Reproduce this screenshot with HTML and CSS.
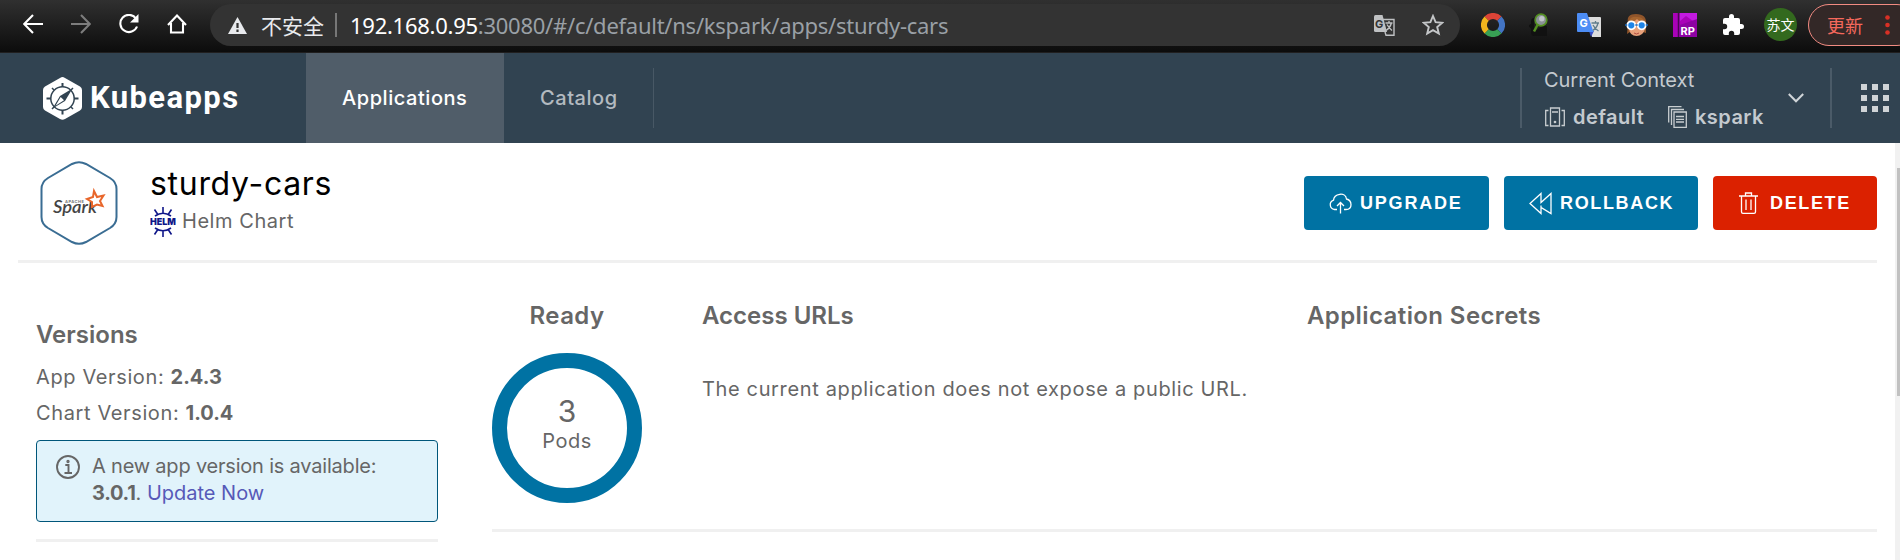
FILE: index.html
```html
<!DOCTYPE html>
<html lang="en">
<head>
<meta charset="utf-8">
<title>Kubeapps</title>
<link rel="stylesheet" href="styles.css">
</head>
<body>
<div class="browser">
  <div class="nav-icons">
    <svg width="20" height="20" viewBox="0 0 20 20" class="line"><path d="M20 10H1.5M10 1L1.200 10L10 19"/></svg>
    <svg width="20" height="20" viewBox="0 0 20 20" class="line dim"><path d="M0 10H18.500M10 1L18.800 10L10 19"/></svg>
    <svg width="22" height="20" viewBox="0 0 22 20" class="line"><path d="M18 4.500A8.600 8.600 0 1 0 19 12.500"/><path d="M20.500 0V8.500H12Z" class="solid"/></svg>
    <svg width="20" height="20" viewBox="0 0 20 20" class="line"><path d="M1 11L10 1.500L19 11M4 9V18.500H16V9"/></svg>
  </div>
  <div class="omnibox">
    <svg width="19" height="17" viewBox="0 0 19 17"><path d="M9.500 0L19 17H0Z" fill="#e8eaed"/><path d="M9.500 6V11M9.500 12.500V15" stroke="#333" stroke-width="2.200"/></svg>
    <span class="insecure">不安全</span><i></i>
    <span class="url"><b>192.168.0.95</b>:30080/#/c/default/ns/kspark/apps/sturdy-cars</span>
    <svg class="ob-translate" width="21" height="21" viewBox="0 0 21 21"><path d="M9 4.500H20V20.200H12L11 17" fill="none" stroke="#bfc1c3" stroke-width="1.400"/><path d="M1.500 0H8.500L13 17H1.500Q0 17 0 15.500V1.500Q0 0 1.500 0Z" fill="#bfc1c3"/><text x="1" y="12.500" class="g-dark">G</text><path d="M11.500 8H18.500M15 6V8M17.500 8Q16 13 12 15.500M13 9.500Q15 13 18 15.500" fill="none" stroke="#bfc1c3" stroke-width="1.300"/></svg>
    <svg class="ob-star" width="22" height="22" viewBox="0 0 22 22"><path d="M11 2L13.600 8.200L20.200 8.700L15.200 13L16.800 19.600L11 16.100L5.200 19.600L6.800 13L1.800 8.700L8.400 8.200Z" fill="none" stroke="#c4c6c8" stroke-width="1.900"/></svg>
  </div>
  <div class="extensions">
    <svg width="24" height="24" viewBox="0 0 24 24" fill="none" stroke-width="6"><path d="M5.600 5.600A9 9 0 0 1 18.400 5.600" stroke="#db4437"/><path d="M18.400 5.600A9 9 0 0 1 18.400 18.400" stroke="#4374c4"/><path d="M18.400 18.400A9 9 0 0 1 5.600 18.400" stroke="#38a054"/><path d="M5.600 18.400A9 9 0 0 1 5.600 5.600" stroke="#f0b51d"/></svg>
    <svg width="24" height="24" viewBox="0 0 24 24"><path d="M5 6Q3 6 3 9V11L1 13L3 15V19Q3 22 5 22M12 14H17V22H5V19" stroke="#111" stroke-width="2" fill="#111"/><path d="M9 11L5 18.500" stroke="#538f20" stroke-width="2.500"/><circle cx="12" cy="7" r="5.800" fill="#8b9297" stroke="#538f20" stroke-width="1.700"/><circle cx="12.800" cy="5.800" r="2.700" fill="#c0c4c8"/></svg>
    <svg width="24" height="24" viewBox="0 0 24 24"><path d="M11 4H23Q24 4 24 5V24H15Z" fill="#dcdcdc"/><path d="M14.500 10H22M18.500 8V10M21 10Q20 15 15 18M16 12Q18 16 21.500 18" fill="none" stroke="#607d8b" stroke-width="1.300"/><path d="M12 18H17L14 24Z" fill="#3a4fc4"/><path d="M1 0H10L16.500 19H1Q0 19 0 18V1Q0 0 1 0Z" fill="#4d8df5"/><text x="2.500" y="14" class="g-white">G</text></svg>
    <svg width="24" height="24" viewBox="0 0 24 24"><path d="M3 10Q1 1 11 1Q22 1 21 11V20L18 19H5L2 21Z" fill="#8f552b"/><path d="M4 8Q10 2 20 8V16Q18 23 11.500 23Q5 23 4 16Z" fill="#e7a17b"/><path d="M4 8Q6 3 12 4Q18 4 20 9Q14 9 12 6Q10 9 4 9Z" fill="#a6652f"/><circle cx="6.300" cy="12.300" r="4" fill="#1d84e8" stroke="#fff" stroke-width="1.800"/><circle cx="16.700" cy="12.300" r="4" fill="#1d84e8" stroke="#fff" stroke-width="1.800"/><path d="M0 12H2.300M10.300 12H12.700M20.700 12H23" stroke="#1d6cc0" stroke-width="1.500"/><path d="M9 20Q11.500 22 14 20" stroke="#b34f43" fill="none"/></svg>
    <svg width="24" height="24" viewBox="0 0 24 24"><path d="M0 0H24V24H0Z" fill="#a902b8"/><path d="M7 8L13 3L24 11V0H7Z" fill="#c31ae0"/><path d="M7 12L24 6V24H7Z" fill="#8d02a3"/><path d="M5.500 0V24" stroke="#4a0455" stroke-width="1.500"/><text x="7.500" y="21.500" class="rp">RP</text></svg>
    <svg width="24" height="24" viewBox="0 0 24 24"><path d="M20.500 11H19V7Q19 5 17 5H13V3.500A2.500 2.500 0 0 0 8 3.500V5H4Q2 5 2 7V10.800H3.500A2.700 2.700 0 0 1 3.500 16.200H2V20Q2 22 4 22H7.800V20.500A2.700 2.700 0 0 1 13.200 20.500V22H17Q19 22 19 20V16H20.500A2.500 2.500 0 0 0 20.500 11Z" fill="#fff"/></svg>
  </div>
  <span class="avatar">苏文</span>
  <div class="update"><span>更新</span><svg width="5" height="20" viewBox="0 0 5 20" fill="#d93025"><circle cx="2.500" cy="2.500" r="2.300"/><circle cx="2.500" cy="10" r="2.300"/><circle cx="2.500" cy="17.500" r="2.300"/></svg></div>
</div>

<header class="header">
  <div class="brand">
    <svg width="39" height="43" viewBox="0 0 39 43"><path d="M19.500 0Q20.500 0 22 1L37 9.500Q39 10.700 39 13V30Q39 32.300 37 33.500L22 42Q19.500 43.500 17 42L2 33.500Q0 32.300 0 30V13Q0 10.700 2 9.500L17 1Q18.500 0 19.500 0Z" fill="#fff"/><g fill="none" stroke="#314351"><circle cx="19.500" cy="21.500" r="11.700" stroke-width="1.500"/><path d="M19.500 6V10M19.500 33V37.500M3.500 21.500H8M31 21.500H35.500" stroke-width="2"/><path d="M9 11L11 13M30 11L28 13M9 32L11 30M30 32L28 30" stroke-width="1.500"/></g><path d="M29.500 11.500L22 24L9.500 31.500L17 19Z" fill="#314351"/><path d="M17.700 20L21 23.200L12.500 28.800Z" fill="#fff"/></svg>
    <span>Kubeapps</span>
  </div>
  <a class="tab active">Applications</a>
  <a class="tab">Catalog</a>
  <i class="rule thin"></i>
  <i class="rule ctx-rule"></i>
  <div class="context">
    <div class="ctx-title">Current Context</div>
    <div class="ctx-row">
      <svg width="20" height="20" viewBox="0 0 20 20" fill="none" stroke="#c8cdd0" stroke-width="1.300"><path d="M5.500 1H14.500V19H5.500ZM7 5H13M3.500 3.500H.7V18.500H3.500M16.500 3.500H19.300V18.500H16.500"/><circle cx="10" cy="15" r=".7"/></svg>
      <b class="c-def">default</b>
      <svg class="ns" width="19" height="22" viewBox="0 0 19 22" fill="none" stroke="#c8cdd0" stroke-width="1.300"><path d="M6 6H18.300V21.300H6ZM8 10.500H16M8 13.300H16M8 16H16M3.500 19V3.500H16M.7 16.500V.7H13.500"/></svg>
      <b class="c-ks">kspark</b>
    </div>
  </div>
  <svg class="chev" width="16" height="10" viewBox="0 0 16 10"><path d="M.8 1L8 8.300L15.200 1" fill="none" stroke="#d0d5d8" stroke-width="2"/></svg>
  <i class="rule end-rule"></i>
  <div class="grid9"><i></i><i></i><i></i><i></i><i></i><i></i><i></i><i></i><i></i></div>
</header>

<div class="page">
  <main>
    <section class="app-head">
      <svg width="78" height="84" viewBox="0 0 78 84"><path d="M32 3Q39 -.5 46 3L70 17Q76.500 21 76.500 28V56Q76.500 63 70 67L46 81Q39 84.500 32 81L8 67Q1.500 63 1.500 56V28Q1.500 21 8 17Z" fill="#fff" stroke="#3a6d93" stroke-width="2"/><text x="25" y="41.500" class="apache" textLength="19">APACHE</text><text x="13" y="52" class="spark" textLength="44" lengthAdjust="spacingAndGlyphs">Spark</text><path d="M54 30L57 36L63.500 34.500L60 40L62.500 45L57 43.500L52 46L52 41L47 38L53 36Z" fill="#fff" stroke="#e8662b" stroke-width="2"/></svg>
      <div class="title">
        <h1>sturdy-cars</h1>
        <p><svg width="26" height="30" viewBox="0 0 26 30"><g fill="none" stroke="#0f1689" stroke-width="1.600"><path d="M5 9Q13 3.500 21 9M5 21Q13 26.500 21 21M13 0V6M13 24V30M4.500 2.500L7.500 7M21.500 2.500L18.500 7M4.500 27.500L7.500 23M21.500 27.500L18.500 23"/></g><text x="0" y="18" class="helm" textLength="26" lengthAdjust="spacingAndGlyphs">HELM</text></svg><span>Helm Chart</span></p>
      </div>
      <div class="buttons">
        <button class="upgrade"><svg width="23" height="21" viewBox="0 0 23 21"><path d="M8 16.500H5.500A4.800 4.800 0 0 1 4.500 7.200C5 .5 16.500 -1.500 17.500 6C19.500 6.500 22 8 22 11.700C22 15 20 16.500 17 16.500H15M11.500 20.500V9.500M8 13L11.500 9.500L15 13"/></svg><span>UPGRADE</span></button>
        <button class="rollback"><svg width="23" height="23" viewBox="0 0 23 23"><path d="M12 1.500L1 11.500L12 21.500V15.500L22 21.500V1.500L12 10.500ZM12 10.500V1.500M12 15.500V13.500"/></svg><span>ROLLBACK</span></button>
        <button class="delete"><svg width="19" height="22" viewBox="0 0 19 22"><path d="M0 4H19M2.500 4V20Q2.500 21.300 4 21.300H15Q16.500 21.300 16.500 20V4M6.500 4V1H12.500V4M7 7.500V18M12 7.500V18"/></svg><span>DELETE</span></button>
      </div>
    </section>
    <section class="body">
      <aside>
        <h2 class="h-ver">Versions</h2>
        <p class="v1">App Version: <b>2.4.3</b></p>
        <p class="v2">Chart Version: <b>1.0.4</b></p>
        <div class="alert">
          <svg width="24" height="24" viewBox="0 0 24 24" fill="none" stroke="#666" stroke-width="1.900"><circle cx="12" cy="12" r="11"/><path d="M9.300 10H12.500V18M8.500 18H16"/><circle cx="12" cy="6.500" r=".7"/></svg>
          <div><div class="a1">A new app version is available:</div><div class="a2"><b>3.0.1</b>. <a>Update Now</a></div></div>
        </div>
      </aside>
      <div class="detail">
        <div class="ready"><h2 class="h-ready">Ready</h2><div class="ring"><span class="n">3</span><span class="pods">Pods</span></div></div>
        <div class="urls"><h2>Access URLs</h2><p class="t-url">The current application does not expose a public URL.</p></div>
        <div class="secrets"><h2 class="h-sec">Application Secrets</h2></div>
      </div>
    </section>
  </main>
  <div class="scrollbar"><i></i></div>
</div>
</body>
</html>
```

FILE: styles.css
```css
* { box-sizing: border-box; }
body { margin: 0; width: 1900px; height: 560px; overflow: hidden; background: #fff; color: #666; font-family: Inter, "Noto Sans CJK SC", sans-serif; }
svg { display: block; flex: none; }
i { display: block; flex: none; }
h1, h2, p { margin: 0; white-space: nowrap; }
span, a, b { white-space: nowrap; }

.browser { height: 53px; display: flex; align-items: flex-start; background: linear-gradient(#303030, #0c0c0c); border-bottom: 1px solid #201f1f; overflow: hidden; }
.nav-icons { width: 210px; padding: 14px 0 0 23px; display: flex; gap: 28px; flex: none; }
.nav-icons svg:nth-child(3) { margin: 0 -1px 0 -1px; }
.line { fill: none; stroke: #fff; stroke-width: 2.1; }
.line .solid { fill: #fff; stroke: none; }
.dim { stroke: #7d7d7d; }
.omnibox { width: 1250px; height: 42px; margin-top: 4px; border-radius: 21px; background: #333; display: flex; align-items: center; padding: 0 16px 0 18px; flex: none; }
.insecure { font: 21px/40px "Noto Sans CJK SC", sans-serif; color: #e8eaed; margin-left: 14px; }
.omnibox > i { width: 2px; height: 24px; background: #777; margin: 0 13px 0 11px; }
.url { font: 22px/42px "Noto Sans", sans-serif; color: #9aa0a6; letter-spacing: -0.26px; }
.url b { font-weight: 400; color: #fff; }
.ob-translate { margin-left: auto; margin-right: 27px; }
.g-dark { font: 700 11px Inter, sans-serif; fill: #333; }
.g-white { font: 700 11px Inter, sans-serif; fill: #fff; }
.rp { font: 700 11px Inter, sans-serif; fill: #fff; }
.extensions { display: flex; gap: 24px; margin: 13px 0 0 21px; }
.avatar { width: 33px; height: 33px; margin: 8px 0 0 19px; border-radius: 50%; background: #33691e; color: #fff; font: 14px/33px "Noto Sans CJK SC", sans-serif; text-align: center; flex: none; }
.update { width: 110px; height: 42px; margin: 4px 0 0 11px; border: 1.5px solid #f28b82; border-radius: 21px; background: #332827; color: #f5685c; display: flex; align-items: center; padding-left: 18px; gap: 22px; font: 18px/38px "Noto Sans CJK SC", sans-serif; flex: none; }

.header { height: 90px; background: #314351; display: flex; align-items: center; }
.brand { width: 306px; padding-left: 43px; display: flex; align-items: center; gap: 8px; color: #fff; flex: none; font: 700 31px/40px Roboto, sans-serif; letter-spacing: 1.4px; }
.tab { height: 90px; display: flex; align-items: center; padding-left: 36px; width: 149px; font-size: 20px; font-weight: 500; letter-spacing: 0.55px; color: #b3bac0; flex: none; }
.tab.active { width: 198px; background: #505d69; color: #fff; }
.rule { width: 2px; height: 60px; background: #4b5b68; }
.rule.thin { width: 1px; background: #485865; }
.ctx-rule { margin-left: auto; margin-right: 22px; }
.context { width: 244px; color: #c4cacf; flex: none; }
.ctx-title { font-size: 20px; line-height: 28px; letter-spacing: -0.05px; }
.ctx-row { display: flex; align-items: center; height: 28px; margin-top: 9px; font-size: 20px; }
.ctx-row b { font-weight: 600; letter-spacing: 0.45px; }
.ctx-row svg { margin-left: 1px; }
.c-def { margin-left: 8px; width: 94px; }
.c-ks { margin-left: 8px; }
.end-rule { margin-left: 26px; }
.grid9 { display: grid; grid-template-columns: repeat(3, 6px); gap: 5px; margin: 0 11px 0 29px; }
.grid9 i { width: 6px; height: 6px; background: #d0d4d7; }

.page { display: flex; height: 417px; }
main { flex: 1; padding: 0 18px; }
.app-head { height: 120px; border-bottom: 3px solid #f0f0f0; display: flex; padding-left: 22px; }
.app-head > svg { margin-top: 18px; }
.apache { font: 700 4px Inter, sans-serif; fill: #777; }
.spark { font: 600 17px Lato, sans-serif; font-style: italic; fill: #444; }
.title { margin-left: 32px; flex: 1; padding-top: 20px; }
h1 { font-size: 32px; line-height: 42px; font-weight: 400; color: #000; letter-spacing: 0.7px; }
.title p { display: flex; align-items: center; font-size: 20px; line-height: 30px; letter-spacing: 0.55px; margin-top: 2px; gap: 6px; }
.title p span { line-height: 26px; padding-bottom: 3px; }
.helm { font: 900 9px Inter, sans-serif; fill: #0f1689; letter-spacing: 0; }
.buttons { display: flex; gap: 15px; padding-top: 33px; }
button { height: 54px; border: 0; border-radius: 4px; background: #0072a3; color: #fff; display: flex; align-items: center; padding: 0 0 0 25px; gap: 8px; font: 700 18px/24px "Liberation Sans", Arial, sans-serif; letter-spacing: 1.65px; }
button svg { fill: none; stroke: #fff; stroke-width: 1.3; }
.upgrade { width: 185px; letter-spacing: 1.8px; }
.rollback { width: 194px; }
.delete { width: 164px; background: #db2100; padding-left: 26px; gap: 12px; }
.body { display: flex; padding-left: 18px; }
h2 { font-size: 24px; line-height: 30px; font-weight: 600; color: #666; }
aside { width: 402px; height: 279px; padding-top: 56px; border-bottom: 3px solid #f0f0f0; font-size: 20px; flex: none; }
aside p { line-height: 36px; letter-spacing: 0.62px; }
aside b { font-weight: 700; letter-spacing: 0; }
.h-ver { line-height: 32px; }
.v1 { margin-top: 8px; }
.alert { height: 82px; margin-top: 9px; border: 1px solid #00567a; border-radius: 4px; background: #e1f3fb; padding: 12px 19px; display: flex; gap: 12px; line-height: 27px; }
.alert svg { margin-top: 2px; }
.a1 { letter-spacing: -0.2px; white-space: nowrap; }
.a2 b { letter-spacing: -0.3px; }
.alert a { color: #5659b8; }
.detail { flex: 1; height: 269px; margin-left: 54px; border-bottom: 3px solid #f0f0f0; display: flex; padding-top: 38px; }
.ready { width: 150px; display: flex; flex-direction: column; align-items: center; flex: none; }
.h-ready { letter-spacing: 0.4px; }
.ring { width: 150px; height: 150px; margin-top: 22px; border: 15px solid #0072a3; border-radius: 50%; display: flex; flex-direction: column; align-items: center; padding-top: 26px; }
.n { font-size: 30px; line-height: 34px; font-weight: 400; }
.pods { font-size: 20px; line-height: 26px; letter-spacing: 0.5px; }
.urls { width: 665px; padding-left: 60px; flex: none; }
.t-url { font-size: 20px; line-height: 30px; margin-top: 43px; letter-spacing: 0.64px; }
.h-sec { letter-spacing: 0.4px; }
.scrollbar { width: 5px; background: #f1f1f1; padding: 25px 0 0 2px; }
.scrollbar i { height: 228px; background: #c1c1c1; }
```
